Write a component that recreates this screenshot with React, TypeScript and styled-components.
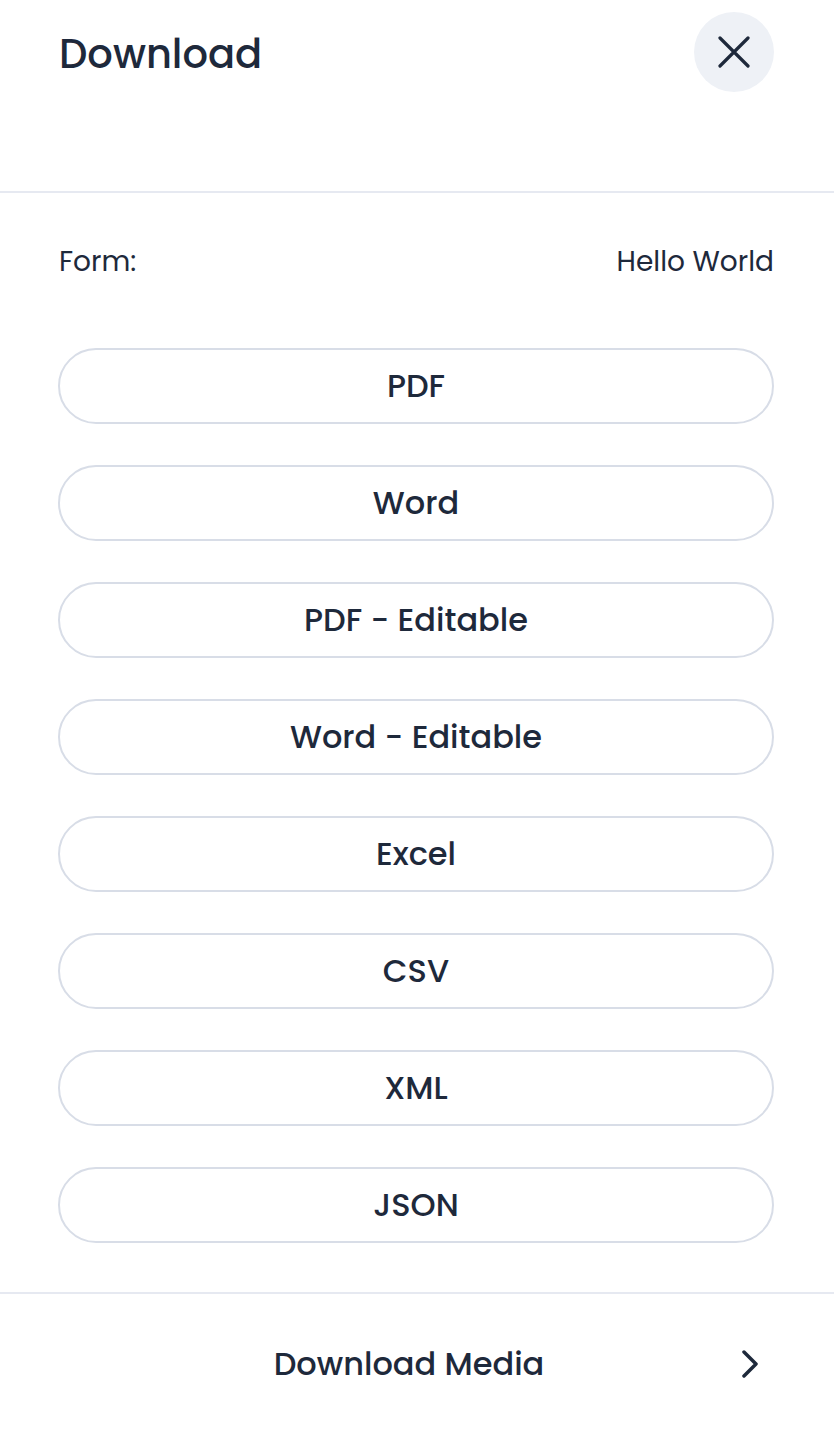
import React from "react";
import styled, { createGlobalStyle } from "styled-components";

const GlobalStyle = createGlobalStyle`
  html, body {
    margin: 0;
    padding: 0;
    background: #ffffff;
  }
  body {
    font-family: "Poppins", "Inter", "Noto Sans", sans-serif;
    color: #1e293b;
  }
  * { box-sizing: border-box; }
`;

const Sheet = styled.div`
  width: 834px;
  min-height: 1434px;
  background: #ffffff;
  display: flex;
  flex-direction: column;
`;

const Header = styled.header`
  display: flex;
  align-items: center;
  justify-content: space-between;
  padding: 12px 60px 99px 59px;
  border-bottom: 2px solid #e6e9f1;
`;

const Title = styled.h1`
  margin: 0;
  padding-top: 4px;
  font-size: 40px;
  font-weight: 500;
  line-height: 76px;
  color: #1e293b;
`;

const CloseButton = styled.button`
  width: 80px;
  height: 80px;
  border-radius: 50%;
  border: none;
  background: #eef1f6;
  display: flex;
  align-items: center;
  justify-content: center;
  padding: 0;
  cursor: pointer;
  color: #1e293b;
`;

const Body = styled.section`
  display: flex;
  flex-direction: column;
  padding: 49px 60px 49px 58px;
  border-bottom: 2px solid #e6e9f1;
`;

const InfoRow = styled.div`
  display: flex;
  justify-content: space-between;
  align-items: center;
  height: 40px;
  padding-left: 1px;
  font-size: 28px;
  font-weight: 400;
  color: #1e293b;
  margin-bottom: 66px;
`;

const OptionList = styled.div`
  display: flex;
  flex-direction: column;
  gap: 41px;
`;

const OptionButton = styled.button`
  height: 76px;
  width: 100%;
  border: 2px solid #d8dde7;
  border-radius: 999px;
  background: #ffffff;
  font-family: inherit;
  font-size: 32px;
  font-weight: 500;
  color: #1e293b;
  cursor: pointer;
  display: flex;
  align-items: center;
  justify-content: center;
  padding: 0;
`;

const MediaRow = styled.button`
  display: flex;
  align-items: center;
  height: 140px;
  width: 100%;
  border: none;
  background: #ffffff;
  padding: 0 76px;
  font-family: inherit;
  cursor: pointer;
  color: #1e293b;
`;

const MediaLabel = styled.span`
  flex: 1;
  text-align: center;
  font-size: 32px;
  font-weight: 500;
`;

const options = [
  "PDF",
  "Word",
  "PDF - Editable",
  "Word - Editable",
  "Excel",
  "CSV",
  "XML",
  "JSON",
];

export default function App() {
  return (
    <>
      <GlobalStyle />
      <Sheet>
        <Header>
          <Title>Download</Title>
          <CloseButton aria-label="Close">
            <svg width="32" height="32" viewBox="0 0 32 32" fill="none">
              <path
                d="M2 2 L30 30 M30 2 L2 30"
                stroke="currentColor"
                strokeWidth="3.2"
                strokeLinecap="round"
              />
            </svg>
          </CloseButton>
        </Header>
        <Body>
          <InfoRow>
            <span>Form:</span>
            <span>Hello World</span>
          </InfoRow>
          <OptionList>
            {options.map((o) => (
              <OptionButton key={o}>{o}</OptionButton>
            ))}
          </OptionList>
        </Body>
        <MediaRow>
          <MediaLabel>Download Media</MediaLabel>
          <svg width="16" height="28" viewBox="0 0 16 28" fill="none">
            <path
              d="M2 2 L14 14 L2 26"
              stroke="currentColor"
              strokeWidth="3.5"
              strokeLinecap="round"
              strokeLinejoin="round"
            />
          </svg>
        </MediaRow>
      </Sheet>
    </>
  );
}
